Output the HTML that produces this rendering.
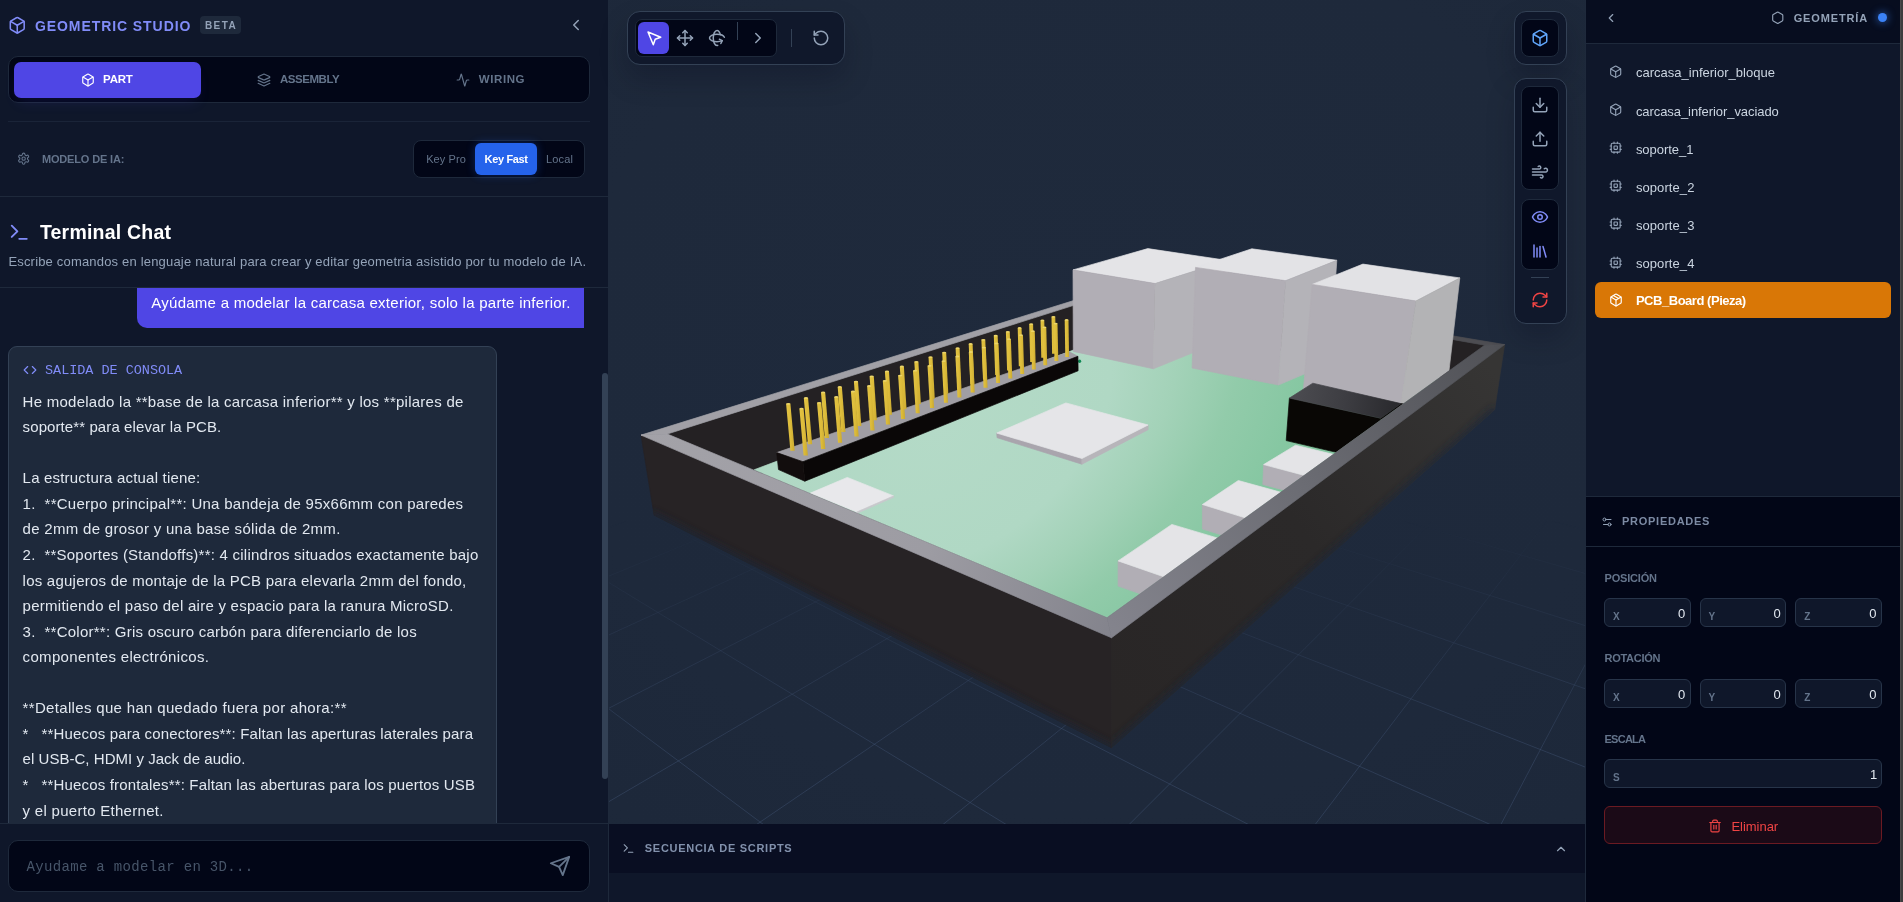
<!DOCTYPE html>
<html lang="es"><head><meta charset="utf-8"><title>Geometric Studio</title>
<style>
html,body{margin:0;padding:0;background:#0f172a;overflow:hidden}
body{width:1903px;height:902px;position:relative;font-family:'Liberation Sans', sans-serif}
.b{position:absolute;box-sizing:border-box}
.t{position:absolute;white-space:pre;line-height:1}
svg{display:block;overflow:visible}
</style></head><body>
<div class="b" style="left:0px;top:0px;width:608px;height:902px;background:#0f172a;"></div>
<div class="b" style="left:608px;top:0px;width:1px;height:902px;background:#1e293b;"></div>
<svg style="position:absolute;left:7.75px;top:15.65px" width="18.5" height="18.5" viewBox="0 0 24 24" fill="none" stroke="#818cf8" stroke-width="2" stroke-linecap="round" stroke-linejoin="round"><path d="M21 8a2 2 0 0 0-1-1.73l-7-4a2 2 0 0 0-2 0l-7 4A2 2 0 0 0 3 8v8a2 2 0 0 0 1 1.73l7 4a2 2 0 0 0 2 0l7-4A2 2 0 0 0 21 16Z"/><path d="m3.3 7 8.7 5 8.7-5"/><path d="M12 22V12"/></svg>
<div class="b" style="left:200px;top:16px;width:41px;height:18px;background:#1e293b;border-radius:4px;"></div>
<svg style="position:absolute;left:567.00px;top:16.00px" width="18" height="18" viewBox="0 0 24 24" fill="none" stroke="#94a3b8" stroke-width="2" stroke-linecap="round" stroke-linejoin="round"><path d="m15 18-6-6 6-6"/></svg>
<div class="b" style="left:8px;top:56px;width:582px;height:47px;background:#020617;border:1px solid #1e293b;border-radius:10px;"></div>
<div class="b" style="left:14px;top:62px;width:187px;height:36px;background:#4f46e5;border-radius:7px;box-shadow:0 8px 14px -4px rgba(79,70,229,.14);"></div>
<svg style="position:absolute;left:80.70px;top:72.70px" width="14" height="14" viewBox="0 0 24 24" fill="none" stroke="#fff" stroke-width="2" stroke-linecap="round" stroke-linejoin="round"><path d="M21 8a2 2 0 0 0-1-1.73l-7-4a2 2 0 0 0-2 0l-7 4A2 2 0 0 0 3 8v8a2 2 0 0 0 1 1.73l7 4a2 2 0 0 0 2 0l7-4A2 2 0 0 0 21 16Z"/><path d="m3.3 7 8.7 5 8.7-5"/><path d="M12 22V12"/></svg>
<svg style="position:absolute;left:256.80px;top:72.70px" width="14" height="14" viewBox="0 0 24 24" fill="none" stroke="#64748b" stroke-width="2" stroke-linecap="round" stroke-linejoin="round"><path d="m12.83 2.18a2 2 0 0 0-1.66 0L2.6 6.08a1 1 0 0 0 0 1.83l8.58 3.91a2 2 0 0 0 1.66 0l8.58-3.9a1 1 0 0 0 0-1.83Z"/><path d="m22 17.65-9.17 4.16a2 2 0 0 1-1.66 0L2 17.65"/><path d="m22 12.65-9.17 4.16a2 2 0 0 1-1.66 0L2 12.65"/></svg>
<svg style="position:absolute;left:455.70px;top:72.70px" width="14" height="14" viewBox="0 0 24 24" fill="none" stroke="#64748b" stroke-width="2" stroke-linecap="round" stroke-linejoin="round"><path d="M22 12h-2.48a2 2 0 0 0-1.93 1.46l-2.35 8.36a.25.25 0 0 1-.48 0L9.24 2.18a.25.25 0 0 0-.48 0l-2.35 8.36A2 2 0 0 1 4.49 12H2"/></svg>
<div class="b" style="left:8px;top:121px;width:582px;height:1px;background:#1a2438;"></div>
<svg style="position:absolute;left:16.85px;top:152.05px" width="13.3" height="13.3" viewBox="0 0 24 24" fill="none" stroke="#64748b" stroke-width="2" stroke-linecap="round" stroke-linejoin="round"><path d="M12.22 2h-.44a2 2 0 0 0-2 2v.18a2 2 0 0 1-1 1.73l-.43.25a2 2 0 0 1-2 0l-.15-.08a2 2 0 0 0-2.73.73l-.22.38a2 2 0 0 0 .73 2.73l.15.1a2 2 0 0 1 1 1.72v.51a2 2 0 0 1-1 1.74l-.15.09a2 2 0 0 0-.73 2.73l.22.38a2 2 0 0 0 2.73.73l.15-.08a2 2 0 0 1 2 0l.43.25a2 2 0 0 1 1 1.73V20a2 2 0 0 0 2 2h.44a2 2 0 0 0 2-2v-.18a2 2 0 0 1 1-1.73l.43-.25a2 2 0 0 1 2 0l.15.08a2 2 0 0 0 2.73-.73l.22-.39a2 2 0 0 0-.73-2.73l-.15-.08a2 2 0 0 1-1-1.74v-.5a2 2 0 0 1 1-1.74l.15-.09a2 2 0 0 0 .73-2.73l-.22-.38a2 2 0 0 0-2.73-.73l-.15.08a2 2 0 0 1-2 0l-.43-.25a2 2 0 0 1-1-1.73V4a2 2 0 0 0-2-2z"/><circle cx="12" cy="12" r="3"/></svg>
<div class="b" style="left:413px;top:140px;width:172px;height:38px;background:#020617;border:1px solid #1e293b;border-radius:8px;"></div>
<div class="b" style="left:475px;top:143px;width:62px;height:32px;background:#2563eb;border-radius:6px;box-shadow:0 0 10px rgba(37,99,235,.32);"></div>
<div class="b" style="left:0px;top:196px;width:608px;height:1px;background:#1e293b;"></div>
<svg style="position:absolute;left:8.45px;top:220.75px" width="22.5" height="22.5" viewBox="0 0 24 24" fill="none" stroke="#818cf8" stroke-width="2" stroke-linecap="round" stroke-linejoin="round"><polyline points="4 17 10 11 4 5"/><line x1="12" x2="20" y1="19" y2="19"/></svg>
<div class="b" style="left:0px;top:287px;width:608px;height:1px;background:#1e293b;"></div>
<div class="b" style="left:0;top:288px;width:608px;height:535px;overflow:hidden">
<div class="b" style="left:137px;top:-12px;width:447px;height:52px;background:#4f46e5;border-radius:0 0 0 10px"></div>
<div class="b" style="left:8px;top:58px;width:489px;height:520px;background:#1e293b;border:1px solid #334155;border-radius:9px;box-sizing:border-box"></div>
</div>
<svg style="position:absolute;left:22.90px;top:362.70px" width="14" height="14" viewBox="0 0 24 24" fill="none" stroke="#818cf8" stroke-width="2" stroke-linecap="round" stroke-linejoin="round"><polyline points="16 18 22 12 16 6"/><polyline points="8 6 2 12 8 18"/></svg>
<div class="b" style="left:602px;top:373px;width:6px;height:406px;background:#334155;border-radius:3px;"></div>
<div class="b" style="left:0px;top:823px;width:608px;height:79px;background:#0f172a;"></div>
<div class="b" style="left:0px;top:823px;width:608px;height:1px;background:#1e293b;"></div>
<div class="b" style="left:8px;top:840px;width:582px;height:52px;background:#020617;border:1px solid #1e293b;border-radius:10px;"></div>
<svg style="position:absolute;left:549.00px;top:854.80px" width="22" height="22" viewBox="0 0 24 24" fill="none" stroke="#64748b" stroke-width="2" stroke-linecap="round" stroke-linejoin="round"><path d="m22 2-7 20-4-9-9-4Z"/><path d="M22 2 11 13"/></svg>
<div class="b" style="left:609px;top:0;width:977px;height:824px;overflow:hidden;background:radial-gradient(ellipse 90% 90% at 50% 45%, #1f2a3c 0%, #1e293b 60%, #1c2739 100%)">
<svg style="position:absolute;left:0;top:0" width="977" height="824" viewBox="609 0 977 824"><defs>
<linearGradient id="pin" x1="0" x2="1" y1="0" y2="0"><stop offset="0" stop-color="#e3c443"/><stop offset=".55" stop-color="#dcbb3a"/><stop offset="1" stop-color="#c9a930"/></linearGradient>
<radialGradient id="pcb" gradientUnits="userSpaceOnUse" cx="940" cy="425" r="335" gradientTransform="translate(940 425) rotate(-35) scale(1.35 .9) translate(-940 -425)"><stop offset="0" stop-color="#b4dac7"/><stop offset=".42" stop-color="#b0d8c4"/><stop offset=".58" stop-color="#a3d2b8"/><stop offset=".74" stop-color="#92cbaa"/><stop offset=".92" stop-color="#86c7a2"/><stop offset="1" stop-color="#84c6a0"/></radialGradient>
<linearGradient id="rimFL" gradientUnits="userSpaceOnUse" x1="641" y1="435" x2="1111" y2="638"><stop offset="0" stop-color="#a3a2a8"/><stop offset=".6" stop-color="#9d9ca3"/><stop offset="1" stop-color="#83838c"/></linearGradient>
<linearGradient id="rimFR" gradientUnits="userSpaceOnUse" x1="1111" y1="638" x2="1504" y2="345"><stop offset="0" stop-color="#84848d"/><stop offset=".5" stop-color="#6b6c73"/><stop offset="1" stop-color="#505156"/></linearGradient>
<linearGradient id="wallFR" gradientUnits="userSpaceOnUse" x1="1111" y1="690" x2="1500" y2="380"><stop offset="0" stop-color="#292626"/><stop offset=".5" stop-color="#2b2929"/><stop offset="1" stop-color="#363534"/></linearGradient>
<linearGradient id="blk" gradientUnits="userSpaceOnUse" x1="1295" y1="395" x2="1395" y2="410"><stop offset="0" stop-color="#4b4b50"/><stop offset=".5" stop-color="#3d3d42"/><stop offset="1" stop-color="#2a2a2e"/></linearGradient>
<linearGradient id="gfade" gradientUnits="userSpaceOnUse" x1="0" y1="520" x2="0" y2="760"><stop offset="0" stop-color="#000"/><stop offset="1" stop-color="#fff"/></linearGradient>
<mask id="gridfade" maskUnits="userSpaceOnUse" x="609" y="0" width="977" height="824"><rect x="609" y="0" width="977" height="824" fill="url(#gfade)"/></mask>
<filter id="blur6" x="-20%" y="-20%" width="140%" height="140%"><feGaussianBlur stdDeviation="3.5"/></filter>
<clipPath id="cInner"><polygon points="609,0 1586,0 1586,272 1107,617.7 609,409.6"/></clipPath>
<clipPath id="cWallL"><polygon points="641,435.1 1111.5,637.8 1111.5,747.6 654.1,515.1"/></clipPath>
<clipPath id="cWallR"><polygon points="1111.5,637.8 1504.6,344.6 1494.6,409.7 1111.5,747.6"/></clipPath>
</defs><g fill="none" stroke="#46597a" stroke-opacity=".42" stroke-width="1" mask="url(#gridfade)"><polyline points="988.7,238.1 1003.6,240.5 1018.9,243.0 1034.5,245.5 1050.5,248.1 1066.8,250.8 1083.6,253.5 1100.8,256.3 1118.4,259.2 1136.5,262.1 1155.0,265.1 1174.0,268.2 1193.5,271.4 1213.6,274.6 1234.2,278.0 1255.3,281.4 1277.1,285.0 1299.4,288.6 1322.4,292.3 1346.1,296.2 1370.5,300.2 1395.6,304.2 1421.4,308.4 1448.1,312.8 1475.6,317.2 1504.0,321.9 1533.3,326.6 1563.6,331.6 1594.9,336.6 1627.2,341.9 1660.7,347.3 1695.4,353.0 1731.3,358.8 1768.5,364.9 1807.2,371.2 1847.3,377.7 1888.9,384.4 1932.2,391.5 1977.2,398.8 2024.1,406.4 2073.0,414.4"/><polyline points="961.4,244.1 976.5,246.6 991.8,249.3 1007.6,251.9 1023.7,254.7 1040.3,257.5 1057.2,260.4 1074.6,263.4 1092.5,266.5 1110.8,269.6 1129.6,272.8 1148.9,276.1 1168.8,279.5 1189.2,283.0 1210.1,286.5 1231.7,290.2 1253.9,294.0 1276.7,297.9 1300.2,301.9 1324.5,306.1 1349.4,310.3 1375.2,314.7 1401.8,319.3 1429.2,324.0 1457.5,328.8 1486.8,333.8 1517.1,339.0 1548.4,344.3 1580.8,349.9 1614.3,355.6 1649.1,361.5 1685.1,367.7 1722.5,374.1 1761.4,380.7 1801.8,387.6 1843.8,394.8 1887.4,402.2 1933.0,410.0 1980.4,418.1 2029.9,426.6 2081.6,435.4"/><polyline points="932.5,250.4 947.6,253.1 963.1,255.9 979.0,258.8 995.3,261.7 1012.0,264.7 1029.1,267.8 1046.8,271.0 1064.8,274.2 1083.4,277.6 1102.5,281.0 1122.1,284.5 1142.2,288.1 1163.0,291.9 1184.3,295.7 1206.3,299.7 1228.9,303.8 1252.3,307.9 1276.3,312.3 1301.1,316.7 1326.7,321.4 1353.2,326.1 1380.5,331.0 1408.7,336.1 1437.9,341.4 1468.1,346.8 1499.4,352.4 1531.7,358.2 1565.3,364.3 1600.2,370.6 1636.3,377.1 1673.9,383.8 1712.9,390.8 1753.5,398.2 1795.8,405.8 1839.9,413.7 1885.8,422.0 1933.8,430.6 1983.9,439.6 2036.4,449.1 2091.2,458.9"/><polyline points="901.7,257.1 916.9,260.0 932.5,263.0 948.6,266.0 965.0,269.2 981.8,272.4 999.2,275.7 1017.0,279.0 1035.2,282.5 1054.0,286.1 1073.4,289.8 1093.3,293.6 1113.8,297.4 1134.9,301.5 1156.6,305.6 1179.0,309.9 1202.1,314.2 1225.9,318.8 1250.5,323.5 1275.9,328.3 1302.2,333.3 1329.3,338.4 1357.4,343.8 1386.4,349.3 1416.5,355.0 1447.7,360.9 1480.0,367.1 1513.6,373.5 1548.4,380.1 1584.6,387.0 1622.3,394.1 1661.5,401.6 1702.3,409.4 1744.8,417.4 1789.2,425.9 1835.6,434.7 1884.0,443.9 1934.8,453.6 1987.9,463.7 2043.6,474.3 2102.1,485.4"/><polyline points="869.0,264.3 884.3,267.4 900.0,270.5 916.1,273.8 932.6,277.1 949.6,280.5 967.1,284.1 985.1,287.7 1003.5,291.4 1022.6,295.3 1042.2,299.2 1062.3,303.3 1083.1,307.5 1104.6,311.8 1126.7,316.2 1149.5,320.8 1173.0,325.6 1197.4,330.5 1222.5,335.6 1248.5,340.8 1275.4,346.2 1303.3,351.8 1332.2,357.7 1362.1,363.7 1393.1,370.0 1425.4,376.5 1458.8,383.2 1493.6,390.2 1529.8,397.5 1567.5,405.1 1606.8,413.0 1647.7,421.3 1690.5,429.9 1735.1,438.9 1781.9,448.3 1830.8,458.2 1882.0,468.5 1935.8,479.4 1992.3,490.7 2051.8,502.7 2114.4,515.4"/><polyline points="834.1,271.9 849.4,275.2 865.1,278.6 881.3,282.1 898.0,285.6 915.1,289.3 932.7,293.1 950.8,297.0 969.5,301.0 988.7,305.1 1008.5,309.4 1029.0,313.7 1050.0,318.3 1071.8,322.9 1094.3,327.8 1117.5,332.7 1141.5,337.9 1166.4,343.2 1192.1,348.7 1218.7,354.4 1246.3,360.4 1274.9,366.5 1304.6,372.9 1335.4,379.5 1367.5,386.4 1400.8,393.5 1435.5,400.9 1471.6,408.7 1509.2,416.8 1548.5,425.2 1589.5,434.0 1632.4,443.2 1677.3,452.8 1724.3,462.9 1773.6,473.5 1825.4,484.6 1879.8,496.3 1937.0,508.5 1997.4,521.5 2061.1,535.2 2128.4,549.6"/><polyline points="796.8,280.1 812.1,283.6 827.9,287.2 844.1,291.0 860.8,294.8 878.0,298.7 895.7,302.8 914.0,307.0 932.8,311.3 952.2,315.7 972.2,320.3 992.9,325.1 1014.2,330.0 1036.3,335.0 1059.2,340.3 1082.8,345.7 1107.2,351.3 1132.6,357.1 1158.8,363.1 1186.1,369.4 1214.4,375.8 1243.8,382.6 1274.3,389.6 1306.1,396.9 1339.2,404.5 1373.6,412.4 1409.6,420.6 1447.1,429.2 1486.3,438.2 1527.3,447.6 1570.3,457.4 1615.3,467.8 1662.5,478.6 1712.1,489.9 1764.3,501.9 1819.2,514.5 1877.2,527.8 1938.4,541.8 2003.1,556.7 2071.8,572.4 2144.6,589.1"/><polyline points="756.8,288.9 772.1,292.6 787.8,296.5 804.1,300.5 820.8,304.6 838.0,308.9 855.8,313.2 874.2,317.8 893.1,322.4 912.7,327.2 932.9,332.2 953.8,337.3 975.4,342.7 997.7,348.2 1020.9,353.9 1044.9,359.8 1069.8,365.9 1095.6,372.3 1122.4,378.9 1150.3,385.7 1179.3,392.9 1209.4,400.3 1240.9,408.0 1273.6,416.1 1307.8,424.5 1343.5,433.3 1380.8,442.5 1419.8,452.1 1460.7,462.2 1503.6,472.7 1548.6,483.8 1595.9,495.4 1645.8,507.7 1698.3,520.6 1753.7,534.3 1812.2,548.7 1874.2,564.0 1940.0,580.1 2009.8,597.3 2084.2,615.6 2163.4,635.2"/><polyline points="713.8,298.3 729.1,302.3 744.8,306.5 761.0,310.8 777.7,315.2 794.9,319.8 812.7,324.5 831.1,329.4 850.1,334.5 869.8,339.7 890.1,345.1 911.2,350.7 933.0,356.5 955.6,362.5 979.0,368.8 1003.4,375.2 1028.7,382.0 1055.0,389.0 1082.3,396.2 1110.8,403.8 1140.5,411.7 1171.4,419.9 1203.7,428.5 1237.5,437.5 1272.8,446.9 1309.8,456.7 1348.5,467.0 1389.1,477.8 1431.9,489.1 1476.8,501.1 1524.1,513.7 1574.0,526.9 1626.7,540.9 1682.4,555.8 1741.5,571.5 1804.1,588.1 1870.8,605.8 1941.8,624.7 2017.6,644.9 2098.7,666.4 2185.7,689.6"/><polyline points="667.6,308.4 682.7,312.7 698.3,317.2 714.4,321.9 731.0,326.7 748.2,331.7 766.0,336.8 784.3,342.1 803.4,347.6 823.1,353.3 843.5,359.2 864.6,365.3 886.6,371.7 909.4,378.3 933.1,385.1 957.7,392.2 983.4,399.6 1010.1,407.4 1038.0,415.4 1067.0,423.8 1097.4,432.6 1129.1,441.8 1162.3,451.3 1197.1,461.4 1233.6,471.9 1271.8,483.0 1312.1,494.6 1354.5,506.9 1399.1,519.8 1446.2,533.4 1496.0,547.8 1548.8,563.0 1604.7,579.2 1664.1,596.4 1727.3,614.6 1794.7,634.1 1866.8,654.9 1944.0,677.2 2026.9,701.2 2116.1,727.0 2212.5,754.8"/><polyline points="617.6,319.3 632.5,324.0 648.0,328.9 663.9,333.9 680.4,339.2 697.4,344.6 715.1,350.2 733.4,355.9 752.3,361.9 772.0,368.2 792.4,374.6 813.6,381.3 835.6,388.3 858.6,395.6 882.4,403.1 907.3,411.0 933.3,419.2 960.3,427.8 988.6,436.8 1018.2,446.1 1049.2,455.9 1081.7,466.2 1115.8,477.0 1151.6,488.3 1189.2,500.3 1228.9,512.8 1270.7,526.1 1314.9,540.0 1361.6,554.8 1411.1,570.5 1463.7,587.2 1519.6,604.8 1579.1,623.7 1642.7,643.8 1710.7,665.3 1783.6,688.4 1862.0,713.3 1946.6,740.0 2038.0,769.0 2137.2,800.4 2245.1,834.5"/><polyline points="563.5,331.1 578.2,336.3 593.3,341.6 609.0,347.1 625.2,352.7 642.0,358.6 659.5,364.7 677.6,371.1 696.4,377.6 715.9,384.5 736.2,391.6 757.3,399.0 779.4,406.7 802.3,414.7 826.3,423.1 851.3,431.9 877.4,441.0 904.8,450.6 933.4,460.6 963.5,471.2 995.1,482.2 1028.2,493.8 1063.1,506.0 1099.9,518.9 1138.8,532.5 1179.8,546.9 1223.3,562.1 1269.3,578.2 1318.3,595.4 1370.4,613.6 1426.0,633.1 1485.4,653.9 1549.0,676.1 1617.3,700.0 1690.8,725.8 1770.3,753.6 1856.3,783.7 1949.7,816.4 2051.6,852.1 2163.2,891.2 2285.9,934.1"/><polyline points="504.7,344.0 519.0,349.6 533.7,355.4 549.0,361.4 564.9,367.6 581.4,374.0 598.5,380.7 616.3,387.7 634.8,394.9 654.0,402.5 674.1,410.3 695.1,418.5 716.9,427.1 739.8,436.0 763.7,445.4 788.7,455.2 814.9,465.5 842.4,476.2 871.3,487.5 901.7,499.4 933.7,512.0 967.4,525.2 1003.1,539.2 1040.8,553.9 1080.8,569.6 1123.2,586.2 1168.3,603.8 1216.3,622.7 1267.6,642.7 1322.5,664.2 1381.4,687.3 1444.7,712.1 1513.0,738.8 1586.7,767.7 1666.8,799.0 1753.9,833.2 1849.2,870.5 1953.6,911.4 2068.8,956.4 2196.3,1006.4 2338.3,1062.0"/><polyline points="440.6,358.0 454.3,364.1 468.5,370.5 483.3,377.0 498.7,383.9 514.7,391.0 531.3,398.3 548.6,406.0 566.6,414.1 585.5,422.4 605.2,431.2 625.7,440.3 647.2,449.9 669.8,459.9 693.4,470.4 718.2,481.4 744.3,493.0 771.8,505.2 800.7,518.1 831.3,531.6 863.6,546.0 897.7,561.2 934.0,577.3 972.5,594.4 1013.5,612.6 1057.2,632.0 1103.9,652.8 1153.9,675.0 1207.6,698.9 1265.5,724.6 1328.0,752.3 1395.6,782.4 1469.1,815.1 1549.3,850.7 1637.1,889.7 1733.6,932.6 1840.2,979.9 1958.6,1032.6 2090.9,1091.3 2239.6,1157.4 2408.1,1232.3"/><polyline points="370.3,373.4 383.4,380.1 396.9,387.1 411.0,394.3 425.6,401.8 440.9,409.7 456.9,417.9 473.5,426.4 490.9,435.3 509.1,444.7 528.1,454.4 548.0,464.7 569.0,475.4 591.0,486.7 614.1,498.6 638.4,511.1 664.1,524.3 691.3,538.3 720.0,553.0 750.4,568.6 782.7,585.2 817.0,602.8 853.6,621.6 892.6,641.7 934.4,663.1 979.2,686.2 1027.3,710.9 1079.3,737.6 1135.4,766.4 1196.4,797.7 1262.7,831.8 1335.1,869.0 1414.7,909.9 1502.3,954.9 1599.3,1004.7 1707.4,1060.2 1828.6,1122.5 1965.2,1192.7 2120.7,1272.5 2299.0,1364.1 2505.6,1470.2"/><polyline points="293.1,390.3 305.2,397.7 317.8,405.4 331.0,413.4 344.7,421.7 359.0,430.5 374.0,439.6 389.7,449.1 406.1,459.1 423.3,469.6 441.4,480.6 460.4,492.2 480.4,504.4 501.5,517.2 523.7,530.8 547.3,545.1 572.2,560.2 598.6,576.3 626.6,593.4 656.5,611.6 688.3,631.0 722.4,651.7 758.8,673.9 798.0,697.7 840.1,723.4 885.6,751.1 934.9,781.1 988.5,813.7 1046.9,849.3 1110.8,888.2 1181.1,931.0 1258.8,978.3 1345.1,1030.9 1441.5,1089.5 1549.9,1155.5 1672.6,1230.3 1812.8,1315.6 1974.4,1414.0 2162.7,1528.7 2385.0,1664.0 2651.5,1826.3"/><polyline points="207.7,409.0 218.6,417.2 230.0,425.7 242.0,434.6 254.4,443.9 267.5,453.7 281.2,463.9 295.5,474.7 310.6,485.9 326.5,497.8 343.2,510.3 360.8,523.5 379.4,537.4 399.1,552.1 420.0,567.7 442.1,584.2 465.6,601.8 490.7,620.6 517.5,640.6 546.1,662.0 576.9,685.0 609.9,709.7 645.5,736.4 684.1,765.2 725.8,796.4 771.3,830.4 821.0,867.6 875.6,908.3 935.7,953.3 1002.3,1003.1 1076.4,1058.5 1159.5,1120.6 1253.2,1190.7 1359.9,1270.4 1482.2,1361.9 1623.9,1467.9 1790.2,1592.2 1987.8,1739.9 2226.7,1918.5 2521.3,2138.8 2893.6,2417.1"/><polyline points="112.9,429.8 122.3,438.9 132.1,448.4 142.4,458.4 153.2,468.8 164.5,479.8 176.5,491.4 189.0,503.5 202.2,516.4 216.2,529.9 230.9,544.2 246.6,559.3 263.1,575.4 280.7,592.4 299.5,610.6 319.4,629.9 340.8,650.6 363.6,672.8 388.2,696.6 414.6,722.2 443.2,749.8 474.1,779.8 507.7,812.4 544.4,847.9 584.5,886.7 628.6,929.5 677.3,976.7 731.5,1029.2 791.9,1087.8 859.9,1153.6 936.9,1228.2 1024.9,1313.5 1126.3,1411.7 1244.4,1526.2 1383.9,1661.4 1551.1,1823.4 1755.1,2021.0 2009.6,2267.6 2335.9,2583.8"/><polyline points="6.9,452.9 14.3,463.2 22.1,473.9 30.2,485.1 38.8,497.0 47.9,509.4 57.4,522.6 67.5,536.5 78.2,551.2 89.5,566.7 101.5,583.3 114.2,600.8 127.8,619.6 142.3,639.6 157.9,660.9 174.5,683.9 192.4,708.5 211.7,735.1 232.6,763.9 255.3,795.1 279.9,829.0 306.9,866.1 336.4,906.8 369.0,951.7 405.1,1001.4 445.2,1056.8 490.3,1118.8 541.1,1188.8 598.9,1268.3 665.2,1359.7 742.0,1465.5 832.1,1589.6 939.2,1737.1 1068.7,1915.5 1228.4,2135.4 1430.2,2413.4 1693.4,2775.8"/><polyline points="-112.4,479.0 -107.5,490.6 -102.4,502.7 -97.1,515.5 -91.4,529.0 -85.4,543.3 -79.1,558.4 -72.4,574.4 -65.2,591.4 -57.6,609.5 -49.5,628.9 -40.8,649.5 -31.6,671.6 -21.6,695.4 -10.9,721.0 0.7,748.6 13.3,778.5 26.9,811.0 41.8,846.5 58.1,885.3 76.0,927.9 95.7,975.1 117.7,1027.5 142.2,1086.0 169.8,1151.7 201.1,1226.2 236.8,1311.3 277.9,1409.4 325.9,1523.7 382.5,1658.7 450.4,1820.4 533.1,2017.8 636.4,2264.0 768.9,2579.8 945.0,2999.5"/><polyline points="988.7,238.1 976.0,240.9 962.8,243.8 949.3,246.7 935.5,249.7 921.2,252.9 906.5,256.1 891.3,259.4 875.7,262.8 859.6,266.3 843.0,270.0 825.9,273.7 808.2,277.6 790.0,281.6 771.1,285.7 751.6,290.0 731.4,294.4 710.5,299.0 688.8,303.7 666.4,308.6 643.1,313.7 618.9,319.0 593.8,324.5 567.7,330.2 540.6,336.2 512.3,342.3 482.9,348.8 452.2,355.5 420.2,362.5 386.7,369.8 351.7,377.5 315.1,385.5 276.7,393.9 236.4,402.7 194.1,412.0 149.6,421.7 102.8,432.0 53.4,442.8 1.2,454.2 -53.9,466.3 -112.4,479.0"/><polyline points="1017.4,242.8 1004.8,245.7 991.7,248.7 978.4,251.8 964.6,255.0 950.4,258.2 935.8,261.6 920.7,265.1 905.1,268.7 889.1,272.4 872.6,276.2 855.5,280.2 837.8,284.2 819.5,288.5 800.7,292.8 781.1,297.3 760.9,302.0 739.9,306.9 718.1,311.9 695.6,317.1 672.1,322.5 647.8,328.1 622.5,334.0 596.1,340.1 568.6,346.4 540.0,353.0 510.2,359.9 479.0,367.1 446.4,374.6 412.3,382.5 376.6,390.8 339.1,399.4 299.8,408.5 258.5,418.1 215.0,428.1 169.1,438.7 120.7,449.9 69.6,461.7 15.4,474.2 -42.0,487.4 -102.9,501.5"/><polyline points="1047.4,247.6 1034.9,250.7 1022.0,253.8 1008.7,257.1 995.1,260.4 981.0,263.9 966.5,267.4 951.5,271.1 936.1,274.8 920.1,278.8 903.7,282.8 886.6,286.9 869.0,291.3 850.8,295.7 831.9,300.3 812.4,305.1 792.1,310.1 771.1,315.2 749.3,320.5 726.6,326.1 703.0,331.8 678.5,337.8 653.0,344.1 626.4,350.6 598.6,357.4 569.7,364.5 539.4,371.9 507.7,379.6 474.6,387.7 439.9,396.2 403.4,405.1 365.1,414.5 324.8,424.3 282.4,434.7 237.6,445.6 190.3,457.2 140.3,469.4 87.3,482.4 31.1,496.2 -28.8,510.8 -92.5,526.4"/><polyline points="1078.8,252.7 1066.4,255.9 1053.7,259.2 1040.6,262.6 1027.1,266.2 1013.2,269.8 998.8,273.5 984.0,277.4 968.6,281.3 952.8,285.4 936.4,289.7 919.5,294.1 902.0,298.7 883.8,303.4 865.0,308.3 845.5,313.3 825.2,318.6 804.2,324.1 782.3,329.7 759.6,335.6 735.9,341.8 711.3,348.2 685.6,354.9 658.8,361.8 630.7,369.1 601.5,376.7 570.8,384.7 538.7,393.0 505.0,401.8 469.6,411.0 432.4,420.6 393.3,430.8 352.0,441.5 308.4,452.8 262.4,464.8 213.6,477.5 161.8,490.9 106.8,505.2 48.3,520.4 -14.1,536.6 -80.9,554.0"/><polyline points="1111.6,258.1 1099.5,261.4 1087.0,264.9 1074.1,268.5 1060.7,272.2 1047.0,276.0 1032.8,279.9 1018.1,284.0 1003.0,288.2 987.3,292.5 971.1,297.0 954.3,301.7 936.9,306.5 918.8,311.5 900.1,316.7 880.6,322.1 860.4,327.7 839.4,333.5 817.6,339.5 794.8,345.8 771.1,352.4 746.3,359.3 720.5,366.4 693.5,373.9 665.2,381.7 635.7,389.9 604.6,398.5 572.1,407.5 537.9,417.0 501.9,427.0 464.0,437.5 423.9,448.6 381.7,460.3 336.9,472.7 289.5,485.8 239.1,499.8 185.5,514.6 128.4,530.4 67.4,547.3 2.1,565.4 -68.0,584.8"/><polyline points="1146.1,263.7 1134.2,267.2 1121.9,270.9 1109.2,274.6 1096.1,278.5 1082.6,282.5 1068.6,286.7 1054.2,291.0 1039.2,295.4 1023.7,300.0 1007.7,304.7 991.1,309.7 973.8,314.8 955.9,320.1 937.3,325.6 918.0,331.3 897.9,337.3 877.0,343.5 855.2,350.0 832.4,356.7 808.7,363.8 783.9,371.1 758.0,378.8 730.8,386.9 702.4,395.3 672.6,404.2 641.2,413.5 608.3,423.2 573.6,433.5 537.0,444.4 498.3,455.8 457.4,468.0 414.1,480.8 368.2,494.4 319.4,508.9 267.3,524.4 211.8,540.8 152.4,558.4 88.8,577.3 20.3,597.6 -53.4,619.5"/><polyline points="1182.3,269.6 1170.7,273.3 1158.6,277.1 1146.2,281.1 1133.4,285.2 1120.1,289.4 1106.4,293.8 1092.2,298.3 1077.5,303.0 1062.3,307.9 1046.5,312.9 1030.1,318.2 1013.0,323.6 995.4,329.3 977.0,335.1 957.8,341.2 937.9,347.6 917.1,354.2 895.4,361.2 872.7,368.4 849.0,376.0 824.3,383.9 798.3,392.2 771.1,400.8 742.5,410.0 712.5,419.6 680.9,429.7 647.6,440.3 612.4,451.5 575.2,463.4 535.9,475.9 494.2,489.3 449.9,503.4 402.7,518.5 352.4,534.5 298.7,551.7 241.1,570.1 179.3,589.8 112.7,611.0 40.9,634.0 -36.9,658.8"/><polyline points="1220.4,275.8 1209.0,279.7 1197.3,283.7 1185.2,287.9 1172.7,292.2 1159.8,296.7 1146.4,301.3 1132.5,306.1 1118.1,311.1 1103.1,316.3 1087.6,321.6 1071.5,327.2 1054.8,333.0 1037.3,339.0 1019.2,345.3 1000.3,351.8 980.6,358.6 960.0,365.7 938.5,373.2 916.0,380.9 892.4,389.1 867.7,397.6 841.8,406.6 814.6,416.0 786.0,425.9 755.8,436.3 724.0,447.3 690.4,458.9 654.8,471.2 617.2,484.2 577.2,498.0 534.7,512.7 489.3,528.4 440.9,545.1 389.2,563.0 333.6,582.2 273.9,602.8 209.5,625.1 139.8,649.1 64.2,675.3 -18.1,703.7"/><polyline points="1260.4,282.3 1249.5,286.4 1238.1,290.7 1226.4,295.1 1214.3,299.7 1201.7,304.4 1188.6,309.3 1175.1,314.4 1161.1,319.7 1146.5,325.2 1131.4,330.9 1115.6,336.8 1099.2,343.0 1082.2,349.4 1064.3,356.1 1045.8,363.1 1026.4,370.4 1006.1,378.0 984.8,386.0 962.6,394.4 939.2,403.2 914.7,412.4 888.9,422.1 861.8,432.4 833.2,443.1 803.0,454.5 771.1,466.5 737.3,479.2 701.4,492.7 663.3,507.1 622.8,522.4 579.5,538.7 533.2,556.1 483.6,574.8 430.3,594.8 372.9,616.4 310.9,639.8 243.7,665.1 170.7,692.6 91.0,722.6 3.6,755.5"/><polyline points="1302.7,289.1 1292.1,293.5 1281.2,298.0 1269.9,302.7 1258.2,307.5 1246.1,312.5 1233.5,317.7 1220.4,323.2 1206.8,328.8 1192.7,334.6 1178.0,340.7 1162.7,347.0 1146.7,353.6 1130.1,360.5 1112.7,367.7 1094.5,375.2 1075.5,383.1 1055.6,391.3 1034.7,399.9 1012.8,409.0 989.8,418.5 965.6,428.5 940.1,439.1 913.2,450.2 884.7,462.0 854.6,474.4 822.7,487.6 788.8,501.6 752.8,516.5 714.4,532.4 673.3,549.4 629.4,567.6 582.2,587.1 531.4,608.1 476.7,630.7 417.4,655.2 353.0,681.9 282.9,710.9 206.2,742.6 121.9,777.4 28.9,815.9"/><polyline points="1347.2,296.4 1337.2,301.0 1326.8,305.8 1316.0,310.7 1304.8,315.9 1293.1,321.2 1281.1,326.7 1268.5,332.5 1255.4,338.5 1241.9,344.7 1227.7,351.2 1212.9,358.0 1197.5,365.0 1181.4,372.4 1164.6,380.1 1146.9,388.2 1128.5,396.7 1109.1,405.6 1088.7,414.9 1067.3,424.8 1044.7,435.1 1021.0,446.0 995.9,457.5 969.3,469.7 941.2,482.6 911.3,496.3 879.6,510.8 845.8,526.3 809.7,542.9 771.1,560.6 729.7,579.6 685.3,600.0 637.3,621.9 585.5,645.7 529.3,671.5 468.2,699.5 401.4,730.1 328.2,763.7 247.5,800.7 158.2,841.6 58.9,887.2"/><polyline points="1394.3,304.0 1384.9,308.9 1375.0,314.0 1364.8,319.2 1354.2,324.7 1343.2,330.4 1331.7,336.3 1319.8,342.4 1307.3,348.8 1294.4,355.5 1280.9,362.4 1266.8,369.7 1252.0,377.3 1236.6,385.2 1220.4,393.5 1203.4,402.3 1185.6,411.4 1166.9,421.1 1147.2,431.2 1126.4,441.9 1104.5,453.2 1081.4,465.1 1056.9,477.7 1030.9,491.1 1003.2,505.3 973.8,520.4 942.5,536.5 909.0,553.8 873.1,572.2 834.6,592.1 793.1,613.4 748.3,636.5 699.8,661.4 647.1,688.5 589.6,718.1 526.6,750.5 457.5,786.1 381.0,825.4 296.1,869.1 201.3,917.9 94.7,972.7"/><polyline points="1444.2,312.1 1435.4,317.3 1426.2,322.7 1416.7,328.3 1406.8,334.1 1396.4,340.2 1385.7,346.5 1374.5,353.0 1362.8,359.9 1350.6,367.0 1337.9,374.5 1324.6,382.3 1310.6,390.4 1296.0,399.0 1280.6,408.0 1264.5,417.5 1247.6,427.4 1229.7,437.9 1210.8,448.9 1190.9,460.6 1169.9,472.9 1147.6,486.0 1123.9,499.9 1098.7,514.6 1071.8,530.4 1043.2,547.2 1012.5,565.1 979.6,584.4 944.2,605.2 906.0,627.5 864.7,651.7 819.9,678.0 771.1,706.5 717.8,737.8 659.3,772.1 594.7,809.9 523.2,851.8 443.6,898.5 354.2,950.8 253.3,1009.9 138.6,1077.2"/><polyline points="1497.2,320.8 1489.1,326.3 1480.6,332.0 1471.9,337.9 1462.8,344.1 1453.3,350.6 1443.4,357.3 1433.0,364.4 1422.3,371.7 1411.0,379.4 1399.2,387.4 1386.8,395.8 1373.8,404.6 1360.2,413.9 1345.9,423.7 1330.8,433.9 1314.9,444.7 1298.1,456.2 1280.3,468.2 1261.5,481.0 1241.6,494.6 1220.4,509.0 1197.8,524.3 1173.8,540.7 1148.0,558.2 1120.5,577.0 1090.8,597.1 1058.9,618.8 1024.4,642.3 987.0,667.7 946.4,695.4 902.0,725.5 853.4,758.6 799.9,795.0 740.8,835.2 675.0,879.9 601.5,929.9 518.7,986.3 424.8,1050.1 317.4,1123.2 193.3,1207.6"/><polyline points="1553.4,329.9 1546.1,335.8 1538.6,341.9 1530.8,348.2 1522.6,354.8 1514.1,361.8 1505.2,369.0 1495.8,376.5 1486.1,384.4 1475.9,392.7 1465.2,401.3 1454.0,410.4 1442.2,420.0 1429.8,430.1 1416.7,440.7 1402.9,451.8 1388.3,463.6 1372.9,476.2 1356.5,489.4 1339.2,503.5 1320.7,518.5 1301.0,534.4 1279.9,551.5 1257.4,569.7 1233.2,589.3 1207.2,610.4 1179.1,633.2 1148.7,657.8 1115.7,684.6 1079.7,713.7 1040.4,745.6 997.1,780.6 949.4,819.3 896.5,862.2 837.4,910.0 771.2,963.7 696.2,1024.5 610.7,1093.7 512.4,1173.4 398.1,1266.0 263.5,1375.1"/><polyline points="1613.2,339.6 1607.0,345.9 1600.5,352.4 1593.7,359.2 1586.6,366.3 1579.2,373.7 1571.5,381.5 1563.4,389.6 1554.9,398.1 1545.9,407.0 1536.6,416.4 1526.7,426.3 1516.4,436.7 1505.4,447.6 1493.9,459.2 1481.7,471.4 1468.7,484.4 1455.0,498.1 1440.4,512.7 1424.9,528.3 1408.3,544.9 1390.5,562.7 1371.5,581.8 1351.0,602.3 1329.0,624.4 1305.1,648.2 1279.3,674.1 1251.2,702.3 1220.4,733.1 1186.8,766.8 1149.6,804.0 1108.5,845.2 1062.8,891.0 1011.6,942.3 953.9,1000.1 888.2,1065.9 813.0,1141.2 726.0,1228.4 624.1,1330.5 503.0,1451.7 357.0,1598.0"/><polyline points="1677.1,350.0 1672.0,356.7 1666.7,363.7 1661.1,371.0 1655.3,378.6 1649.2,386.6 1642.8,394.9 1636.1,403.7 1629.1,412.9 1621.7,422.6 1614.0,432.8 1605.8,443.5 1597.1,454.8 1588.0,466.8 1578.3,479.4 1568.1,492.9 1557.2,507.2 1545.6,522.4 1533.3,538.6 1520.0,555.9 1505.9,574.4 1490.7,594.3 1474.3,615.8 1456.7,639.0 1437.5,664.0 1416.7,691.3 1394.1,721.0 1369.2,753.6 1341.9,789.4 1311.8,828.9 1278.3,872.8 1240.9,921.8 1198.8,977.0 1151.2,1039.4 1096.8,1110.8 1034.0,1193.0 960.9,1288.8 874.6,1402.0 771.2,1537.5 645.0,1703.0 487.6,1909.3"/><polyline points="1745.3,361.1 1741.6,368.3 1737.6,375.8 1733.5,383.6 1729.1,391.8 1724.6,400.4 1719.8,409.5 1714.8,418.9 1709.6,428.9 1704.0,439.4 1698.2,450.5 1692.0,462.2 1685.4,474.6 1678.5,487.8 1671.1,501.7 1663.3,516.5 1655.0,532.3 1646.1,549.2 1636.5,567.3 1626.3,586.7 1615.3,607.5 1603.5,630.0 1590.6,654.3 1576.7,680.7 1561.6,709.4 1545.0,740.8 1526.8,775.3 1506.8,813.3 1484.5,855.4 1459.8,902.3 1432.0,954.9 1400.6,1014.4 1364.9,1082.0 1323.9,1159.7 1276.4,1249.8 1220.5,1355.7 1154.1,1481.7 1073.5,1634.3 974.0,1822.9 847.9,2061.9 682.9,2374.7"/><polyline points="1818.5,373.0 1816.2,380.7 1813.9,388.8 1811.4,397.2 1808.8,406.1 1806.1,415.4 1803.2,425.2 1800.2,435.5 1797.0,446.3 1793.6,457.8 1790.1,469.9 1786.3,482.8 1782.3,496.4 1778.1,510.9 1773.6,526.3 1768.8,542.7 1763.6,560.3 1758.1,579.2 1752.2,599.4 1745.8,621.3 1738.9,644.8 1731.4,670.4 1723.3,698.1 1714.4,728.5 1704.6,761.7 1693.9,798.3 1682.1,838.7 1668.9,883.7 1654.2,933.9 1637.6,990.6 1618.8,1054.8 1597.3,1128.3 1572.4,1213.2 1543.4,1312.4 1509.0,1429.9 1467.6,1571.1 1416.9,1744.2 1353.4,1961.2 1271.4,2241.3 1161.4,2616.7"/><polyline points="1897.0,385.8 1896.5,394.1 1896.0,402.8 1895.5,411.9 1894.9,421.5 1894.3,431.6 1893.7,442.2 1893.1,453.5 1892.4,465.3 1891.6,477.9 1890.9,491.2 1890.0,505.4 1889.2,520.4 1888.2,536.4 1887.2,553.6 1886.2,571.9 1885.0,591.6 1883.8,612.8 1882.4,635.7 1881.0,660.4 1879.4,687.3 1877.7,716.6 1875.9,748.6 1873.8,783.8 1871.5,822.7 1869.0,865.8 1866.2,913.9 1863.1,967.9 1859.5,1029.0 1855.4,1098.7 1850.8,1178.8 1845.3,1272.0 1838.9,1381.7 1831.3,1512.8 1822.0,1672.2 1810.4,1870.1 1795.7,2122.4 1776.3,2455.2 1749.6,2914.1"/><polyline points="1981.6,399.5 1983.2,408.5 1984.8,417.9 1986.6,427.8 1988.4,438.2 1990.4,449.2 1992.4,460.8 1994.6,473.1 1996.8,486.1 1999.3,500.0 2001.9,514.6 2004.6,530.3 2007.5,547.0 2010.7,564.9 2014.1,584.0 2017.7,604.6 2021.6,626.8 2025.8,650.8 2030.4,676.8 2035.4,705.1 2040.8,736.1 2046.8,770.0 2053.3,807.3 2060.6,848.7 2068.7,894.8 2077.8,946.4 2088.0,1004.5 2099.6,1070.6 2113.0,1146.4 2128.4,1234.1 2146.5,1336.9 2167.9,1458.9 2193.8,1606.2 2225.7,1787.4 2265.9,2015.9 2318.1,2312.8 2388.7,2714.6"/><polyline points="2073.0,414.4 2077.0,424.1 2081.1,434.3 2085.6,445.1 2090.2,456.5 2095.1,468.5 2100.4,481.2 2105.9,494.7 2111.8,509.0 2118.0,524.3 2124.7,540.6 2131.8,558.0 2139.5,576.6 2147.7,596.6 2156.5,618.2 2166.0,641.5 2176.3,666.7 2187.6,694.1 2199.8,723.9 2213.2,756.6 2227.9,792.6 2244.2,832.3 2262.3,876.5 2282.5,925.8 2305.2,981.2 2331.0,1044.1 2360.4,1115.8 2394.3,1198.5 2433.8,1295.0 2480.4,1408.8 2536.4,1545.3 2604.6,1711.9 2689.8,1919.8 2799.1,2186.5 2944.4,2541.1"/></g><polygon points="641.0,435.1 1111.5,637.8 1111.5,747.6 654.1,515.1" fill="#272325" stroke="#272325" stroke-width=".7" stroke-linejoin="round" /><g clip-path="url(#cWallL)"><line x1="650" y1="516" x2="1113" y2="751.5" stroke="#1c2639" stroke-width="11" filter="url(#blur6)" opacity=".8"/></g><polygon points="1111.5,637.8 1504.6,344.6 1494.6,409.7 1111.5,747.6" fill="url(#wallFR)" stroke="url(#wallFR)" stroke-width=".7" stroke-linejoin="round" /><g clip-path="url(#cWallR)"><line x1="1110" y1="752" x2="1497" y2="411" stroke="#1c2639" stroke-width="11" filter="url(#blur6)" opacity=".8"/></g><polygon points="667.3,434.0 1140.2,284.3 1484.6,345.2 1107.0,617.7" fill="#242123" stroke="#242123" stroke-width=".7" stroke-linejoin="round" /><polygon points="754.3,469.7 1135.0,327.0 1440.0,377.4 1107.0,617.7" fill="url(#pcb)" stroke="url(#pcb)" stroke-width=".7" stroke-linejoin="round" /><polygon points="641.0,435.1 1133.0,282.1 1140.2,284.3 667.3,434.0" fill="#a1a0a6" stroke="#a1a0a6" stroke-width=".7" stroke-linejoin="round" /><polygon points="1504.6,344.6 1484.6,345.2 1140.2,284.3 1133.0,282.1" fill="#4d4d52" stroke="#4d4d52" stroke-width=".7" stroke-linejoin="round" /><g clip-path="url(#cInner)"><polygon points="810.4,493.1 847.3,477.4 893.6,495.9 856.8,512.0" fill="#e8e8eb" stroke="#e8e8eb" stroke-width=".7" stroke-linejoin="round" /><polygon points="856.8,512.0 893.6,495.9 893.6,497.3 856.8,513.4" fill="#c9c8cd" stroke="#c9c8cd" stroke-width=".7" stroke-linejoin="round" /><ellipse cx="1079.6" cy="361.2" rx="1.6" ry="1.8" fill="#0f8a55"/><polygon points="776.7,452.6 802.9,461.7 1077.9,356.3 1069.3,351.8" fill="#a09ea4" stroke="#a09ea4" stroke-width=".7" stroke-linejoin="round" /><polygon points="802.9,461.7 1077.9,356.3 1078.1,370.8 804.8,481.2" fill="#0a0707" stroke="#0a0707" stroke-width=".7" stroke-linejoin="round" /><polygon points="776.7,452.6 802.9,461.7 804.8,481.2 778.5,469.6" fill="#120d0d" stroke="#120d0d" stroke-width=".7" stroke-linejoin="round" /><polygon points="1051.5,316.8 1055.3,316.8 1055.9,353.8 1052.1,353.8" fill="url(#pin)"/><ellipse cx="1053.4" cy="316.8" rx="1.9" ry="0.9" fill="#ecd56a"/><polygon points="1040.5,320.4 1044.3,320.4 1045.1,357.8 1041.3,357.8" fill="url(#pin)"/><ellipse cx="1042.4" cy="320.4" rx="1.9" ry="0.9" fill="#ecd56a"/><polygon points="1029.2,324.1 1033.1,324.1 1034.0,361.9 1030.2,361.9" fill="url(#pin)"/><ellipse cx="1031.2" cy="324.1" rx="1.9" ry="0.9" fill="#ecd56a"/><polygon points="1017.7,327.9 1021.6,327.9 1022.6,366.2 1018.8,366.2" fill="url(#pin)"/><ellipse cx="1019.6" cy="327.9" rx="1.9" ry="0.9" fill="#ecd56a"/><polygon points="1005.9,331.8 1009.8,331.8 1011.0,370.5 1007.1,370.5" fill="url(#pin)"/><ellipse cx="1007.8" cy="331.8" rx="1.9" ry="0.9" fill="#ecd56a"/><polygon points="993.8,335.7 997.7,335.7 999.1,374.9 995.2,374.9" fill="url(#pin)"/><ellipse cx="995.7" cy="335.7" rx="2.0" ry="0.9" fill="#ecd56a"/><polygon points="981.4,339.8 985.3,339.8 986.9,379.4 983.0,379.4" fill="url(#pin)"/><ellipse cx="983.3" cy="339.8" rx="2.0" ry="0.9" fill="#ecd56a"/><polygon points="968.7,344.0 972.6,344.0 974.4,384.1 970.4,384.1" fill="url(#pin)"/><ellipse cx="970.6" cy="344.0" rx="2.0" ry="0.9" fill="#ecd56a"/><polygon points="955.6,348.2 959.6,348.2 961.5,388.9 957.5,388.9" fill="url(#pin)"/><ellipse cx="957.6" cy="348.2" rx="2.0" ry="0.9" fill="#ecd56a"/><polygon points="942.2,352.6 946.2,352.6 948.3,393.7 944.3,393.7" fill="url(#pin)"/><ellipse cx="944.2" cy="352.6" rx="2.0" ry="0.9" fill="#ecd56a"/><polygon points="928.5,357.1 932.5,357.1 934.8,398.8 930.8,398.8" fill="url(#pin)"/><ellipse cx="930.5" cy="357.1" rx="2.0" ry="0.9" fill="#ecd56a"/><polygon points="914.3,361.8 918.4,361.8 920.9,403.9 916.8,403.9" fill="url(#pin)"/><ellipse cx="916.4" cy="361.8" rx="2.0" ry="0.9" fill="#ecd56a"/><polygon points="899.8,366.5 903.9,366.5 906.6,409.2 902.6,409.2" fill="url(#pin)"/><ellipse cx="901.9" cy="366.5" rx="2.0" ry="0.9" fill="#ecd56a"/><polygon points="884.9,371.4 889.0,371.4 892.0,414.7 887.9,414.7" fill="url(#pin)"/><ellipse cx="887.0" cy="371.4" rx="2.1" ry="0.9" fill="#ecd56a"/><polygon points="869.6,376.4 873.8,376.4 876.9,420.2 872.8,420.2" fill="url(#pin)"/><ellipse cx="871.7" cy="376.4" rx="2.1" ry="0.9" fill="#ecd56a"/><polygon points="853.9,381.6 858.0,381.6 861.4,426.0 857.2,426.0" fill="url(#pin)"/><ellipse cx="856.0" cy="381.6" rx="2.1" ry="0.9" fill="#ecd56a"/><polygon points="837.7,386.9 841.9,386.9 845.5,431.9 841.3,431.9" fill="url(#pin)"/><ellipse cx="839.8" cy="386.9" rx="2.1" ry="0.9" fill="#ecd56a"/><polygon points="821.0,392.4 825.2,392.4 829.0,438.0 824.8,438.0" fill="url(#pin)"/><ellipse cx="823.1" cy="392.4" rx="2.1" ry="0.9" fill="#ecd56a"/><polygon points="803.8,398.0 808.1,398.0 812.2,444.3 807.9,444.3" fill="url(#pin)"/><ellipse cx="806.0" cy="398.0" rx="2.1" ry="0.9" fill="#ecd56a"/><polygon points="786.1,403.8 790.4,403.8 794.7,450.7 790.4,450.7" fill="url(#pin)"/><ellipse cx="788.3" cy="403.8" rx="2.1" ry="0.9" fill="#ecd56a"/><polygon points="1064.7,319.9 1068.5,319.9 1069.1,356.9 1065.3,356.9" fill="url(#pin)"/><ellipse cx="1066.6" cy="319.9" rx="1.9" ry="0.9" fill="#ecd56a"/><polygon points="1053.7,323.6 1057.5,323.6 1058.3,361.0 1054.5,361.0" fill="url(#pin)"/><ellipse cx="1055.6" cy="323.6" rx="1.9" ry="0.9" fill="#ecd56a"/><polygon points="1042.4,327.3 1046.3,327.3 1047.2,365.2 1043.4,365.2" fill="url(#pin)"/><ellipse cx="1044.4" cy="327.3" rx="1.9" ry="0.9" fill="#ecd56a"/><polygon points="1030.9,331.2 1034.8,331.2 1035.8,369.5 1032.0,369.5" fill="url(#pin)"/><ellipse cx="1032.8" cy="331.2" rx="1.9" ry="0.9" fill="#ecd56a"/><polygon points="1019.1,335.2 1023.0,335.2 1024.2,373.9 1020.3,373.9" fill="url(#pin)"/><ellipse cx="1021.0" cy="335.2" rx="1.9" ry="0.9" fill="#ecd56a"/><polygon points="1007.0,339.2 1010.9,339.2 1012.3,378.4 1008.4,378.4" fill="url(#pin)"/><ellipse cx="1008.9" cy="339.2" rx="2.0" ry="0.9" fill="#ecd56a"/><polygon points="994.6,343.4 998.5,343.4 1000.1,383.0 996.2,383.0" fill="url(#pin)"/><ellipse cx="996.5" cy="343.4" rx="2.0" ry="0.9" fill="#ecd56a"/><polygon points="981.9,347.6 985.8,347.6 987.6,387.7 983.6,387.7" fill="url(#pin)"/><ellipse cx="983.8" cy="347.6" rx="2.0" ry="0.9" fill="#ecd56a"/><polygon points="968.8,352.0 972.8,352.0 974.7,392.6 970.7,392.6" fill="url(#pin)"/><ellipse cx="970.8" cy="352.0" rx="2.0" ry="0.9" fill="#ecd56a"/><polygon points="955.4,356.5 959.4,356.5 961.5,397.6 957.5,397.6" fill="url(#pin)"/><ellipse cx="957.4" cy="356.5" rx="2.0" ry="0.9" fill="#ecd56a"/><polygon points="941.7,361.1 945.7,361.1 948.0,402.7 944.0,402.7" fill="url(#pin)"/><ellipse cx="943.7" cy="361.1" rx="2.0" ry="0.9" fill="#ecd56a"/><polygon points="927.5,365.8 931.6,365.8 934.1,408.0 930.0,408.0" fill="url(#pin)"/><ellipse cx="929.6" cy="365.8" rx="2.0" ry="0.9" fill="#ecd56a"/><polygon points="913.0,370.7 917.1,370.7 919.8,413.3 915.8,413.3" fill="url(#pin)"/><ellipse cx="915.1" cy="370.7" rx="2.0" ry="0.9" fill="#ecd56a"/><polygon points="898.1,375.6 902.2,375.6 905.2,418.9 901.1,418.9" fill="url(#pin)"/><ellipse cx="900.2" cy="375.6" rx="2.1" ry="0.9" fill="#ecd56a"/><polygon points="882.8,380.8 887.0,380.8 890.1,424.6 886.0,424.6" fill="url(#pin)"/><ellipse cx="884.9" cy="380.8" rx="2.1" ry="0.9" fill="#ecd56a"/><polygon points="867.1,386.0 871.2,386.0 874.6,430.4 870.4,430.4" fill="url(#pin)"/><ellipse cx="869.2" cy="386.0" rx="2.1" ry="0.9" fill="#ecd56a"/><polygon points="850.9,391.5 855.1,391.5 858.7,436.5 854.5,436.5" fill="url(#pin)"/><ellipse cx="853.0" cy="391.5" rx="2.1" ry="0.9" fill="#ecd56a"/><polygon points="834.2,397.0 838.4,397.0 842.2,442.7 838.0,442.7" fill="url(#pin)"/><ellipse cx="836.3" cy="397.0" rx="2.1" ry="0.9" fill="#ecd56a"/><polygon points="817.0,402.8 821.3,402.8 825.4,449.0 821.1,449.0" fill="url(#pin)"/><ellipse cx="819.2" cy="402.8" rx="2.1" ry="0.9" fill="#ecd56a"/><polygon points="799.4,408.7 803.6,408.7 807.9,455.6 803.6,455.6" fill="url(#pin)"/><ellipse cx="801.5" cy="408.7" rx="2.1" ry="0.9" fill="#ecd56a"/><polygon points="996.7,433.1 1081.9,458.5 1081.9,464.2 997.1,437.7" fill="#a9a5ad" stroke="#a9a5ad" stroke-width=".7" stroke-linejoin="round" /><polygon points="1081.9,458.5 1148.1,425.0 1148.1,429.7 1081.9,464.2" fill="#b7b5ba" stroke="#b7b5ba" stroke-width=".7" stroke-linejoin="round" /><polygon points="996.7,433.1 1065.8,402.9 1148.1,425.0 1081.9,458.5" fill="#e5e5e8" stroke="#e5e5e8" stroke-width=".7" stroke-linejoin="round" /><polygon points="1073.0,269.9 1147.8,248.6 1227.9,260.5 1155.1,283.5" fill="#e4e4e7" stroke="#e4e4e7" stroke-width=".7" stroke-linejoin="round" /><polygon points="1073.0,269.9 1155.1,283.5 1153.4,368.8 1073.3,351.4" fill="#b1aeb5" stroke="#b1aeb5" stroke-width=".7" stroke-linejoin="round" /><polygon points="1155.1,283.5 1227.9,260.5 1224.0,340.0 1153.4,368.8" fill="#b4b3b8" stroke="#b4b3b8" stroke-width=".7" stroke-linejoin="round" /><polygon points="1195.5,267.4 1251.8,248.8 1336.8,260.3 1285.6,280.7" fill="#e3e3e6" stroke="#e3e3e6" stroke-width=".7" stroke-linejoin="round" /><polygon points="1195.5,267.4 1285.6,280.7 1278.5,385.0 1192.1,368.0" fill="#b1aeb5" stroke="#b1aeb5" stroke-width=".7" stroke-linejoin="round" /><polygon points="1285.6,280.7 1336.8,260.3 1330.0,363.0 1278.5,385.0" fill="#b4b3b8" stroke="#b4b3b8" stroke-width=".7" stroke-linejoin="round" /><polygon points="1312.2,284.4 1362.9,264.1 1459.8,277.9 1415.9,301.0" fill="#e2e2e5" stroke="#e2e2e5" stroke-width=".7" stroke-linejoin="round" /><polygon points="1312.2,284.4 1415.9,301.0 1400.7,409.0 1303.4,390.0" fill="#b1aeb5" stroke="#b1aeb5" stroke-width=".7" stroke-linejoin="round" /><polygon points="1415.9,301.0 1459.8,277.9 1448.9,371.5 1400.7,406.4" fill="#b3b3b5" stroke="#b3b3b5" stroke-width=".7" stroke-linejoin="round" /><polygon points="1289.4,398.1 1380.6,418.6 1378.0,462.0 1286.2,440.6" fill="#090705" stroke="#090705" stroke-width=".7" stroke-linejoin="round" /><polygon points="1380.5,418.2 1401.0,403.6 1410.0,405.0 1386.0,424.0" fill="#0c0a09" stroke="#0c0a09" stroke-width=".7" stroke-linejoin="round" /><polygon points="1289.4,398.1 1312.8,383.2 1401.0,403.6 1380.5,418.2" fill="url(#blk)" stroke="url(#blk)" stroke-width=".7" stroke-linejoin="round" /><polygon points="1263.6,464.6 1315.5,478.4 1315.5,498.4 1262.8,484.5" fill="#b1aeb5" stroke="#b1aeb5" stroke-width=".7" stroke-linejoin="round" /><polygon points="1263.6,464.6 1295.5,445.2 1345.7,457.3 1315.5,478.4" fill="#e4e4e7" stroke="#e4e4e7" stroke-width=".7" stroke-linejoin="round" /><polygon points="1202.4,504.5 1257.8,521.8 1257.8,546.3 1202.4,529.0" fill="#b1aeb5" stroke="#b1aeb5" stroke-width=".7" stroke-linejoin="round" /><polygon points="1202.4,504.5 1238.3,480.5 1293.7,495.8 1257.8,521.8" fill="#e4e4e7" stroke="#e4e4e7" stroke-width=".7" stroke-linejoin="round" /><polygon points="1118.1,560.9 1177.5,581.6 1177.5,606.8 1118.1,586.1" fill="#b1aeb5" stroke="#b1aeb5" stroke-width=".7" stroke-linejoin="round" /><polygon points="1118.1,560.9 1171.8,524.4 1228.9,541.4 1177.5,581.6" fill="#e4e4e7" stroke="#e4e4e7" stroke-width=".7" stroke-linejoin="round" /></g><polygon points="641.0,435.1 667.3,434.0 1107.0,617.7 1111.5,637.8" fill="url(#rimFL)" stroke="url(#rimFL)" stroke-width=".7" stroke-linejoin="round" /><polygon points="1111.5,637.8 1107.0,617.7 1484.6,345.2 1504.6,344.6" fill="url(#rimFR)" stroke="url(#rimFR)" stroke-width=".7" stroke-linejoin="round" /></svg>
</div>
<div class="b" style="left:626.5px;top:11px;width:218.5px;height:54px;background:rgba(15,23,42,.92);border:1px solid #334155;border-radius:13px;box-sizing:border-box;box-shadow:0 14px 28px rgba(2,6,23,.22);"></div>
<div class="b" style="left:635px;top:19px;width:142px;height:38px;background:#020617;border:1px solid #1e293b;border-radius:7px;box-sizing:border-box;"></div>
<div class="b" style="left:638px;top:22px;width:31px;height:32px;background:#4f46e5;border-radius:6px;"></div>
<svg style="position:absolute;left:644.50px;top:29.00px" width="18" height="18" viewBox="0 0 24 24" fill="none" stroke="#fff" stroke-width="2" stroke-linecap="round" stroke-linejoin="round"><path d="m4 4 7.07 17 2.51-7.39L21 11.07z"/></svg>
<svg style="position:absolute;left:675.90px;top:29.20px" width="18" height="18" viewBox="0 0 24 24" fill="none" stroke="#94a3b8" stroke-width="2" stroke-linecap="round" stroke-linejoin="round"><polyline points="5 9 2 12 5 15"/><polyline points="9 5 12 2 15 5"/><polyline points="15 19 12 22 9 19"/><polyline points="19 9 22 12 19 15"/><line x1="2" x2="22" y1="12" y2="12"/><line x1="12" x2="12" y1="2" y2="22"/></svg>
<svg style="position:absolute;left:707.80px;top:29.20px" width="18" height="18" viewBox="0 0 24 24" fill="none" stroke="#94a3b8" stroke-width="2" stroke-linecap="round" stroke-linejoin="round"><path d="M16.466 7.5C15.643 4.237 13.952 2 12 2 9.239 2 7 6.477 7 12s2.239 10 5 10c.342 0 .677-.069 1-.2"/><path d="m15.194 13.707 3.814 1.86-1.86 3.814"/><path d="M19 15.57c-1.804.885-4.274 1.43-7 1.43-5.523 0-10-2.239-10-5s4.477-5 10-5c4.838 0 8.873 1.718 9.8 4"/></svg>
<div class="b" style="left:737px;top:22px;width:1px;height:18px;background:#334155;"></div>
<svg style="position:absolute;left:749.00px;top:29.10px" width="18" height="18" viewBox="0 0 24 24" fill="none" stroke="#94a3b8" stroke-width="2" stroke-linecap="round" stroke-linejoin="round"><path d="m9 18 6-6-6-6"/></svg>
<div class="b" style="left:791px;top:29px;width:1px;height:18px;background:#334155;"></div>
<svg style="position:absolute;left:811.80px;top:29.00px" width="18" height="18" viewBox="0 0 24 24" fill="none" stroke="#94a3b8" stroke-width="2" stroke-linecap="round" stroke-linejoin="round"><path d="M3 12a9 9 0 1 0 9-9 9.75 9.75 0 0 0-6.74 2.74L3 8"/><path d="M3 3v5h5"/></svg>
<div class="b" style="left:1514px;top:11px;width:53px;height:54px;background:rgba(15,23,42,.92);border:1px solid #334155;border-radius:12px;box-sizing:border-box;box-shadow:0 14px 28px rgba(2,6,23,.22);"></div>
<div class="b" style="left:1521px;top:19px;width:37.5px;height:37.5px;background:#020617;border:1px solid #1e293b;border-radius:8px;box-sizing:border-box;"></div>
<svg style="position:absolute;left:1531.00px;top:29.00px" width="18" height="18" viewBox="0 0 24 24" fill="none" stroke="#60a5fa" stroke-width="2" stroke-linecap="round" stroke-linejoin="round"><path d="M21 8a2 2 0 0 0-1-1.73l-7-4a2 2 0 0 0-2 0l-7 4A2 2 0 0 0 3 8v8a2 2 0 0 0 1 1.73l7 4a2 2 0 0 0 2 0l7-4A2 2 0 0 0 21 16Z"/><path d="m3.3 7 8.7 5 8.7-5"/><path d="M12 22V12"/></svg>
<div class="b" style="left:1514px;top:78px;width:53px;height:246px;background:rgba(15,23,42,.92);border:1px solid #334155;border-radius:12px;box-sizing:border-box;box-shadow:0 14px 28px rgba(2,6,23,.22);"></div>
<div class="b" style="left:1521px;top:86px;width:37.5px;height:104px;background:#020617;border:1px solid #1e293b;border-radius:8px;box-sizing:border-box;"></div>
<svg style="position:absolute;left:1531.00px;top:95.80px" width="18" height="18" viewBox="0 0 24 24" fill="none" stroke="#94a3b8" stroke-width="2" stroke-linecap="round" stroke-linejoin="round"><path d="M21 15v4a2 2 0 0 1-2 2H5a2 2 0 0 1-2-2v-4"/><polyline points="7 10 12 15 17 10"/><line x1="12" x2="12" y1="15" y2="3"/></svg>
<svg style="position:absolute;left:1531.00px;top:129.50px" width="18" height="18" viewBox="0 0 24 24" fill="none" stroke="#94a3b8" stroke-width="2" stroke-linecap="round" stroke-linejoin="round"><path d="M21 15v4a2 2 0 0 1-2 2H5a2 2 0 0 1-2-2v-4"/><polyline points="17 8 12 3 7 8"/><line x1="12" x2="12" y1="3" y2="15"/></svg>
<svg style="position:absolute;left:1531.00px;top:162.80px" width="18" height="18" viewBox="0 0 24 24" fill="none" stroke="#94a3b8" stroke-width="2" stroke-linecap="round" stroke-linejoin="round"><path d="M17.7 7.7a2.5 2.5 0 1 1 1.8 4.3H2"/><path d="M9.6 4.6A2 2 0 1 1 11 8H2"/><path d="M12.6 19.4A2 2 0 1 0 14 16H2"/></svg>
<div class="b" style="left:1521px;top:198.5px;width:37.5px;height:71.0px;background:#020617;border:1px solid #1e293b;border-radius:8px;box-sizing:border-box;"></div>
<svg style="position:absolute;left:1531.00px;top:208.00px" width="18" height="18" viewBox="0 0 24 24" fill="none" stroke="#818cf8" stroke-width="2" stroke-linecap="round" stroke-linejoin="round"><path d="M2 12s3-7 10-7 10 7 10 7-3 7-10 7-10-7-10-7Z"/><circle cx="12" cy="12" r="3"/></svg>
<svg style="position:absolute;left:1531.00px;top:242.10px" width="18" height="18" viewBox="0 0 24 24" fill="none" stroke="#818cf8" stroke-width="2" stroke-linecap="round" stroke-linejoin="round"><path d="m16 6 4 14"/><path d="M12 6v14"/><path d="M8 8v12"/><path d="M4 4v16"/></svg>
<div class="b" style="left:1531px;top:277px;width:18px;height:1px;background:#334155;"></div>
<svg style="position:absolute;left:1531.00px;top:291.00px" width="18" height="18" viewBox="0 0 24 24" fill="none" stroke="#ef4444" stroke-width="2" stroke-linecap="round" stroke-linejoin="round"><path d="M3 12a9 9 0 0 1 9-9 9.75 9.75 0 0 1 6.74 2.74L21 8"/><path d="M21 3v5h-5"/><path d="M21 12a9 9 0 0 1-9 9 9.75 9.75 0 0 1-6.74-2.74L3 16"/><path d="M8 16H3v5"/></svg>
<div class="b" style="left:609px;top:824px;width:977px;height:49px;background:#090e22;"></div>
<div class="b" style="left:609px;top:873px;width:977px;height:29px;background:#0f172a;"></div>
<svg style="position:absolute;left:622.00px;top:841.50px" width="13" height="13" viewBox="0 0 24 24" fill="none" stroke="#94a3b8" stroke-width="2" stroke-linecap="round" stroke-linejoin="round"><polyline points="4 17 10 11 4 5"/><line x1="12" x2="20" y1="19" y2="19"/></svg>
<svg style="position:absolute;left:1553.50px;top:841.50px" width="14" height="14" viewBox="0 0 24 24" fill="none" stroke="#94a3b8" stroke-width="2" stroke-linecap="round" stroke-linejoin="round"><path d="m18 15-6-6-6 6"/></svg>
<div class="b" style="left:1586px;top:0px;width:317px;height:902px;background:#0f172a;"></div>
<div class="b" style="left:1585px;top:0px;width:1px;height:902px;background:#1e293b;"></div>
<div class="b" style="left:1586px;top:0px;width:317px;height:43px;background:#070d1f;"></div>
<div class="b" style="left:1586px;top:43px;width:317px;height:1px;background:#1e293b;"></div>
<svg style="position:absolute;left:1604.00px;top:11.00px" width="14" height="14" viewBox="0 0 24 24" fill="none" stroke="#94a3b8" stroke-width="2" stroke-linecap="round" stroke-linejoin="round"><path d="m15 18-6-6 6-6"/></svg>
<svg style="position:absolute;left:1770.95px;top:11.45px" width="13.5" height="13.5" viewBox="0 0 24 24" fill="none" stroke="#94a3b8" stroke-width="2" stroke-linecap="round" stroke-linejoin="round"><path d="M21 16V8a2 2 0 0 0-1-1.73l-7-4a2 2 0 0 0-2 0l-7 4A2 2 0 0 0 3 8v8a2 2 0 0 0 1 1.73l7 4a2 2 0 0 0 2 0l7-4A2 2 0 0 0 21 16z"/></svg>
<div class="b" style="left:1878px;top:13px;width:9px;height:9px;background:#3b82f6;border-radius:5px;box-shadow:0 0 8px rgba(59,130,246,.8);"></div>
<svg style="position:absolute;left:1609.10px;top:64.60px" width="13.4" height="13.4" viewBox="0 0 24 24" fill="none" stroke="#94a3b8" stroke-width="2" stroke-linecap="round" stroke-linejoin="round"><path d="M21 8a2 2 0 0 0-1-1.73l-7-4a2 2 0 0 0-2 0l-7 4A2 2 0 0 0 3 8v8a2 2 0 0 0 1 1.73l7 4a2 2 0 0 0 2 0l7-4A2 2 0 0 0 21 16Z"/><path d="m3.3 7 8.7 5 8.7-5"/><path d="M12 22V12"/></svg>
<svg style="position:absolute;left:1609.10px;top:102.82px" width="13.4" height="13.4" viewBox="0 0 24 24" fill="none" stroke="#94a3b8" stroke-width="2" stroke-linecap="round" stroke-linejoin="round"><path d="M21 8a2 2 0 0 0-1-1.73l-7-4a2 2 0 0 0-2 0l-7 4A2 2 0 0 0 3 8v8a2 2 0 0 0 1 1.73l7 4a2 2 0 0 0 2 0l7-4A2 2 0 0 0 21 16Z"/><path d="m3.3 7 8.7 5 8.7-5"/><path d="M12 22V12"/></svg>
<svg style="position:absolute;left:1609.10px;top:141.04px" width="13.4" height="13.4" viewBox="0 0 24 24" fill="none" stroke="#94a3b8" stroke-width="2" stroke-linecap="round" stroke-linejoin="round"><rect width="16" height="16" x="4" y="4" rx="2"/><rect width="6" height="6" x="9" y="9" rx="1"/><path d="M15 2v2"/><path d="M15 20v2"/><path d="M2 15h2"/><path d="M2 9h2"/><path d="M20 15h2"/><path d="M20 9h2"/><path d="M9 2v2"/><path d="M9 20v2"/></svg>
<svg style="position:absolute;left:1609.10px;top:179.26px" width="13.4" height="13.4" viewBox="0 0 24 24" fill="none" stroke="#94a3b8" stroke-width="2" stroke-linecap="round" stroke-linejoin="round"><rect width="16" height="16" x="4" y="4" rx="2"/><rect width="6" height="6" x="9" y="9" rx="1"/><path d="M15 2v2"/><path d="M15 20v2"/><path d="M2 15h2"/><path d="M2 9h2"/><path d="M20 15h2"/><path d="M20 9h2"/><path d="M9 2v2"/><path d="M9 20v2"/></svg>
<svg style="position:absolute;left:1609.10px;top:217.48px" width="13.4" height="13.4" viewBox="0 0 24 24" fill="none" stroke="#94a3b8" stroke-width="2" stroke-linecap="round" stroke-linejoin="round"><rect width="16" height="16" x="4" y="4" rx="2"/><rect width="6" height="6" x="9" y="9" rx="1"/><path d="M15 2v2"/><path d="M15 20v2"/><path d="M2 15h2"/><path d="M2 9h2"/><path d="M20 15h2"/><path d="M20 9h2"/><path d="M9 2v2"/><path d="M9 20v2"/></svg>
<svg style="position:absolute;left:1609.10px;top:255.70px" width="13.4" height="13.4" viewBox="0 0 24 24" fill="none" stroke="#94a3b8" stroke-width="2" stroke-linecap="round" stroke-linejoin="round"><rect width="16" height="16" x="4" y="4" rx="2"/><rect width="6" height="6" x="9" y="9" rx="1"/><path d="M15 2v2"/><path d="M15 20v2"/><path d="M2 15h2"/><path d="M2 9h2"/><path d="M20 15h2"/><path d="M20 9h2"/><path d="M9 2v2"/><path d="M9 20v2"/></svg>
<div class="b" style="left:1595px;top:282px;width:296px;height:36px;background:#d97706;border-radius:6px;"></div>
<svg style="position:absolute;left:1608.80px;top:292.50px" width="14" height="14" viewBox="0 0 24 24" fill="none" stroke="#fff" stroke-width="2" stroke-linecap="round" stroke-linejoin="round"><path d="m7.5 4.27 9 5.15"/><path d="M21 8a2 2 0 0 0-1-1.73l-7-4a2 2 0 0 0-2 0l-7 4A2 2 0 0 0 3 8v8a2 2 0 0 0 1 1.73l7 4a2 2 0 0 0 2 0l7-4A2 2 0 0 0 21 16Z"/><path d="m3.3 7 8.7 5 8.7-5"/><path d="M12 22V12"/></svg>
<div class="b" style="left:1586px;top:496px;width:317px;height:406px;background:#020617;"></div>
<div class="b" style="left:1586px;top:496px;width:317px;height:1px;background:#1e293b;"></div>
<svg style="position:absolute;left:1600.70px;top:515.50px" width="12" height="12" viewBox="0 0 24 24" fill="none" stroke="#94a3b8" stroke-width="2" stroke-linecap="round" stroke-linejoin="round"><path d="M20 7h-9"/><path d="M14 17H5"/><circle cx="17" cy="17" r="3"/><circle cx="7" cy="7" r="3"/></svg>
<div class="b" style="left:1586px;top:546px;width:317px;height:1px;background:#1e293b;"></div>
<div class="b" style="left:1604.0px;top:598.3px;width:86.5px;height:28.5px;background:#0f172a;border:1px solid #273449;border-radius:6px;box-sizing:border-box;"></div>
<div class="b" style="left:1699.6px;top:598.3px;width:86.5px;height:28.5px;background:#0f172a;border:1px solid #273449;border-radius:6px;box-sizing:border-box;"></div>
<div class="b" style="left:1795.2px;top:598.3px;width:86.5px;height:28.5px;background:#0f172a;border:1px solid #273449;border-radius:6px;box-sizing:border-box;"></div>
<div class="b" style="left:1604.0px;top:679.0px;width:86.5px;height:28.5px;background:#0f172a;border:1px solid #273449;border-radius:6px;box-sizing:border-box;"></div>
<div class="b" style="left:1699.6px;top:679.0px;width:86.5px;height:28.5px;background:#0f172a;border:1px solid #273449;border-radius:6px;box-sizing:border-box;"></div>
<div class="b" style="left:1795.2px;top:679.0px;width:86.5px;height:28.5px;background:#0f172a;border:1px solid #273449;border-radius:6px;box-sizing:border-box;"></div>
<div class="b" style="left:1604px;top:759.3px;width:277.70000000000005px;height:28.5px;background:#0f172a;border:1px solid #273449;border-radius:6px;box-sizing:border-box;"></div>
<div class="b" style="left:1604px;top:806.3px;width:277.70000000000005px;height:37.40000000000009px;background:#1b0a17;border:1px solid #6b1a22;border-radius:6px;box-sizing:border-box;"></div>
<svg style="position:absolute;left:1707.80px;top:819.10px" width="14" height="14" viewBox="0 0 24 24" fill="none" stroke="#ef4444" stroke-width="2" stroke-linecap="round" stroke-linejoin="round"><path d="M3 6h18"/><path d="M19 6v14c0 1-1 2-2 2H7c-1 0-2-1-2-2V6"/><path d="M8 6V4c0-1 1-2 2-2h4c1 0 2 1 2 2v2"/><line x1="10" x2="10" y1="11" y2="17"/><line x1="14" x2="14" y1="11" y2="17"/></svg>
<div class="b" style="left:1900px;top:0px;width:3px;height:902px;background:#3d3d3d;"></div>
<div class="b" style="left:1900px;top:0px;width:1px;height:902px;background:#4a4a4a;"></div>
<div id="txt" style="position:absolute;left:0;top:0;width:1903px;height:902px;will-change:transform">
<div class="t" style="left:34.90px;top:19.25px;font-family:'Liberation Sans', sans-serif;font-size:14px;font-weight:700;color:#818cf8;letter-spacing:0.929px">GEOMETRIC STUDIO</div>
<div class="t" style="left:204.90px;top:20.64px;font-family:'Liberation Sans', sans-serif;font-size:10px;font-weight:700;color:#94a3b8;letter-spacing:1.472px">BETA</div>
<div class="t" style="left:103.10px;top:74.27px;font-family:'Liberation Sans', sans-serif;font-size:11.5px;font-weight:700;color:#fff;letter-spacing:-0.284px">PART</div>
<div class="t" style="left:279.90px;top:74.27px;font-family:'Liberation Sans', sans-serif;font-size:11.5px;font-weight:700;color:#64748b;letter-spacing:-0.449px">ASSEMBLY</div>
<div class="t" style="left:478.80px;top:74.27px;font-family:'Liberation Sans', sans-serif;font-size:11.5px;font-weight:700;color:#64748b;letter-spacing:0.578px">WIRING</div>
<div class="t" style="left:41.90px;top:153.59px;font-family:'Liberation Sans', sans-serif;font-size:11px;font-weight:700;color:#64748b;letter-spacing:-0.154px">MODELO DE IA:</div>
<div class="t" style="left:426.20px;top:154.19px;font-family:'Liberation Sans', sans-serif;font-size:11px;font-weight:400;color:#64748b;letter-spacing:0.093px">Key Pro</div>
<div class="t" style="left:484.60px;top:154.19px;font-family:'Liberation Sans', sans-serif;font-size:11px;font-weight:700;color:#fff;letter-spacing:-0.351px">Key Fast</div>
<div class="t" style="left:546.10px;top:154.19px;font-family:'Liberation Sans', sans-serif;font-size:11px;font-weight:400;color:#64748b;letter-spacing:0.126px">Local</div>
<div class="t" style="left:39.90px;top:222.69px;font-family:'Liberation Sans', sans-serif;font-size:19.5px;font-weight:700;color:#fff;letter-spacing:0.210px">Terminal Chat</div>
<div class="t" style="left:8.40px;top:255.00px;font-family:'Liberation Sans', sans-serif;font-size:13px;font-weight:400;color:#94a3b8;letter-spacing:0.185px">Escribe comandos en lenguaje natural para crear y editar geometria asistido por tu modelo de IA.</div>
<div class="t" style="left:151.30px;top:295.30px;font-family:'Liberation Sans', sans-serif;font-size:15px;font-weight:400;color:#fff;letter-spacing:0.260px">Ayúdame a modelar la carcasa exterior, solo la parte inferior.</div>
<div class="t" style="left:45.00px;top:364.05px;font-family:'Liberation Mono', monospace;font-size:13.5px;font-weight:400;color:#818cf8;letter-spacing:-0.033px">SALIDA DE CONSOLA</div>
<div class="t" style="left:22.60px;top:393.60px;font-family:'Liberation Sans', sans-serif;font-size:15px;font-weight:400;color:#e2e8f0;letter-spacing:0.255px">He modelado la **base de la carcasa inferior** y los **pilares de</div>
<div class="t" style="left:22.60px;top:419.16px;font-family:'Liberation Sans', sans-serif;font-size:15px;font-weight:400;color:#e2e8f0;letter-spacing:0.095px">soporte** para elevar la PCB.</div>
<div class="t" style="left:22.60px;top:470.28px;font-family:'Liberation Sans', sans-serif;font-size:15px;font-weight:400;color:#e2e8f0;letter-spacing:0.192px">La estructura actual tiene:</div>
<div class="t" style="left:22.60px;top:495.84px;font-family:'Liberation Sans', sans-serif;font-size:15px;font-weight:400;color:#e2e8f0;letter-spacing:0.271px">1.  **Cuerpo principal**: Una bandeja de 95x66mm con paredes</div>
<div class="t" style="left:22.60px;top:521.40px;font-family:'Liberation Sans', sans-serif;font-size:15px;font-weight:400;color:#e2e8f0;letter-spacing:0.306px">de 2mm de grosor y una base sólida de 2mm.</div>
<div class="t" style="left:22.60px;top:546.96px;font-family:'Liberation Sans', sans-serif;font-size:15px;font-weight:400;color:#e2e8f0;letter-spacing:0.238px">2.  **Soportes (Standoffs)**: 4 cilindros situados exactamente bajo</div>
<div class="t" style="left:22.60px;top:572.52px;font-family:'Liberation Sans', sans-serif;font-size:15px;font-weight:400;color:#e2e8f0;letter-spacing:0.234px">los agujeros de montaje de la PCB para elevarla 2mm del fondo,</div>
<div class="t" style="left:22.60px;top:598.08px;font-family:'Liberation Sans', sans-serif;font-size:15px;font-weight:400;color:#e2e8f0;letter-spacing:0.255px">permitiendo el paso del aire y espacio para la ranura MicroSD.</div>
<div class="t" style="left:22.60px;top:623.64px;font-family:'Liberation Sans', sans-serif;font-size:15px;font-weight:400;color:#e2e8f0;letter-spacing:0.254px">3.  **Color**: Gris oscuro carbón para diferenciarlo de los</div>
<div class="t" style="left:22.60px;top:649.20px;font-family:'Liberation Sans', sans-serif;font-size:15px;font-weight:400;color:#e2e8f0;letter-spacing:0.328px">componentes electrónicos.</div>
<div class="t" style="left:22.60px;top:700.32px;font-family:'Liberation Sans', sans-serif;font-size:15px;font-weight:400;color:#e2e8f0;letter-spacing:0.329px">**Detalles que han quedado fuera por ahora:**</div>
<div class="t" style="left:22.60px;top:725.88px;font-family:'Liberation Sans', sans-serif;font-size:15px;font-weight:400;color:#e2e8f0;letter-spacing:0.155px">*   **Huecos para conectores**: Faltan las aperturas laterales para</div>
<div class="t" style="left:22.60px;top:751.44px;font-family:'Liberation Sans', sans-serif;font-size:15px;font-weight:400;color:#e2e8f0;letter-spacing:0.032px">el USB-C, HDMI y Jack de audio.</div>
<div class="t" style="left:22.60px;top:777.00px;font-family:'Liberation Sans', sans-serif;font-size:15px;font-weight:400;color:#e2e8f0;letter-spacing:0.159px">*   **Huecos frontales**: Faltan las aberturas para los puertos USB</div>
<div class="t" style="left:22.60px;top:802.56px;font-family:'Liberation Sans', sans-serif;font-size:15px;font-weight:400;color:#e2e8f0;letter-spacing:0.285px">y el puerto Ethernet.</div>
<div class="t" style="left:26.50px;top:859.87px;font-family:'Liberation Mono', monospace;font-size:14px;font-weight:400;color:#475569;letter-spacing:0.330px">Ayudame a modelar en 3D...</div>
<div class="t" style="left:644.80px;top:842.59px;font-family:'Liberation Sans', sans-serif;font-size:11px;font-weight:700;color:#8291ac;letter-spacing:0.708px">SECUENCIA DE SCRIPTS</div>
<div class="t" style="left:1793.70px;top:12.89px;font-family:'Liberation Sans', sans-serif;font-size:11px;font-weight:700;color:#94a3b8;letter-spacing:0.859px">GEOMETRÍA</div>
<div class="t" style="left:1635.90px;top:66.30px;font-family:'Liberation Sans', sans-serif;font-size:13px;font-weight:400;color:#cbd5e1;letter-spacing:0.015px">carcasa_inferior_bloque</div>
<div class="t" style="left:1635.90px;top:104.52px;font-family:'Liberation Sans', sans-serif;font-size:13px;font-weight:400;color:#cbd5e1;letter-spacing:-0.071px">carcasa_inferior_vaciado</div>
<div class="t" style="left:1635.90px;top:142.74px;font-family:'Liberation Sans', sans-serif;font-size:13px;font-weight:400;color:#cbd5e1;letter-spacing:-0.041px">soporte_1</div>
<div class="t" style="left:1635.90px;top:180.96px;font-family:'Liberation Sans', sans-serif;font-size:13px;font-weight:400;color:#cbd5e1;letter-spacing:0.084px">soporte_2</div>
<div class="t" style="left:1635.90px;top:219.18px;font-family:'Liberation Sans', sans-serif;font-size:13px;font-weight:400;color:#cbd5e1;letter-spacing:0.084px">soporte_3</div>
<div class="t" style="left:1635.90px;top:257.40px;font-family:'Liberation Sans', sans-serif;font-size:13px;font-weight:400;color:#cbd5e1;letter-spacing:0.084px">soporte_4</div>
<div class="t" style="left:1635.90px;top:293.60px;font-family:'Liberation Sans', sans-serif;font-size:13px;font-weight:700;color:#fff;letter-spacing:-0.466px">PCB_Board (Pieza)</div>
<div class="t" style="left:1622.00px;top:515.79px;font-family:'Liberation Sans', sans-serif;font-size:11px;font-weight:700;color:#7c8aa3;letter-spacing:0.732px">PROPIEDADES</div>
<div class="t" style="left:1604.50px;top:573.09px;font-family:'Liberation Sans', sans-serif;font-size:11px;font-weight:700;color:#64748b;letter-spacing:-0.185px">POSICIÓN</div>
<div class="t" style="left:1613.00px;top:612.03px;font-family:'Liberation Sans', sans-serif;font-size:10px;font-weight:700;color:#64748b;letter-spacing:0.000px">X</div>
<div class="t" style="right:217.80px;top:607.30px;font-family:'Liberation Sans', sans-serif;font-size:13px;font-weight:400;color:#e2e8f0;letter-spacing:0.000px">0</div>
<div class="t" style="left:1708.60px;top:612.03px;font-family:'Liberation Sans', sans-serif;font-size:10px;font-weight:700;color:#64748b;letter-spacing:0.000px">Y</div>
<div class="t" style="right:122.20px;top:607.30px;font-family:'Liberation Sans', sans-serif;font-size:13px;font-weight:400;color:#e2e8f0;letter-spacing:0.000px">0</div>
<div class="t" style="left:1804.20px;top:612.03px;font-family:'Liberation Sans', sans-serif;font-size:10px;font-weight:700;color:#64748b;letter-spacing:0.000px">Z</div>
<div class="t" style="right:26.60px;top:607.30px;font-family:'Liberation Sans', sans-serif;font-size:13px;font-weight:400;color:#e2e8f0;letter-spacing:0.000px">0</div>
<div class="t" style="left:1604.50px;top:652.99px;font-family:'Liberation Sans', sans-serif;font-size:11px;font-weight:700;color:#64748b;letter-spacing:-0.266px">ROTACIÓN</div>
<div class="t" style="left:1613.00px;top:692.74px;font-family:'Liberation Sans', sans-serif;font-size:10px;font-weight:700;color:#64748b;letter-spacing:0.000px">X</div>
<div class="t" style="right:217.80px;top:688.00px;font-family:'Liberation Sans', sans-serif;font-size:13px;font-weight:400;color:#e2e8f0;letter-spacing:0.000px">0</div>
<div class="t" style="left:1708.60px;top:692.74px;font-family:'Liberation Sans', sans-serif;font-size:10px;font-weight:700;color:#64748b;letter-spacing:0.000px">Y</div>
<div class="t" style="right:122.20px;top:688.00px;font-family:'Liberation Sans', sans-serif;font-size:13px;font-weight:400;color:#e2e8f0;letter-spacing:0.000px">0</div>
<div class="t" style="left:1804.20px;top:692.74px;font-family:'Liberation Sans', sans-serif;font-size:10px;font-weight:700;color:#64748b;letter-spacing:0.000px">Z</div>
<div class="t" style="right:26.60px;top:688.00px;font-family:'Liberation Sans', sans-serif;font-size:13px;font-weight:400;color:#e2e8f0;letter-spacing:0.000px">0</div>
<div class="t" style="left:1604.50px;top:734.09px;font-family:'Liberation Sans', sans-serif;font-size:11px;font-weight:700;color:#64748b;letter-spacing:-0.747px">ESCALA</div>
<div class="t" style="left:1613.00px;top:773.03px;font-family:'Liberation Sans', sans-serif;font-size:10px;font-weight:700;color:#64748b;letter-spacing:0.000px">S</div>
<div class="t" style="right:25.80px;top:768.30px;font-family:'Liberation Sans', sans-serif;font-size:13px;font-weight:400;color:#e2e8f0;letter-spacing:0.000px">1</div>
<div class="t" style="left:1731.40px;top:819.60px;font-family:'Liberation Sans', sans-serif;font-size:13px;font-weight:400;color:#ef4444;letter-spacing:-0.024px">Eliminar</div>
</div>
</body></html>
